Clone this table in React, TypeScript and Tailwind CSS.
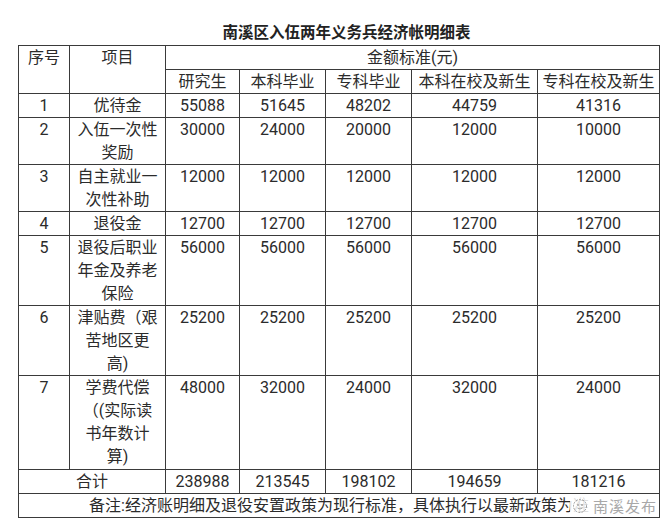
import React from "react";

const F = { fontFamily: 'Roboto, "Noto Sans CJK SC", sans-serif' } as const;

type Row = { no: string; item: string[]; vals: string[]; h: string };

const rows: Row[] = [
  { no: "1", item: ["优待金"], vals: ["55088", "51645", "48202", "44759", "41316"], h: "h-[24px]" },
  { no: "2", item: ["入伍一次性", "奖励"], vals: ["30000", "24000", "20000", "12000", "10000"], h: "h-[47px]" },
  { no: "3", item: ["自主就业一", "次性补助"], vals: ["12000", "12000", "12000", "12000", "12000"], h: "h-[46px]" },
  { no: "4", item: ["退役金"], vals: ["12700", "12700", "12700", "12700", "12700"], h: "h-[24px]" },
  { no: "5", item: ["退役后职业", "年金及养老", "保险"], vals: ["56000", "56000", "56000", "56000", "56000"], h: "h-[70px]" },
  { no: "6", item: ["津贴费（艰", "苦地区更", "高)"], vals: ["25200", "25200", "25200", "25200", "25200"], h: "h-[70px]" },
  { no: "7", item: ["学费代偿", "（(实际读", "书年数计", "算)"], vals: ["48000", "32000", "24000", "32000", "24000"], h: "h-[94px]" },
];

const td = "border border-[#3a3a3a] align-top text-center p-0 leading-[23px]";

export default function App() {
  return (
    <div className="w-[669px] h-[529px] bg-white text-[#2b2b2b] overflow-hidden" style={F}>
      <div className="pt-[21px] pl-[18px]">
        <div className="w-[641px] h-[24px] pl-[16px] text-center font-bold text-[15.5px] leading-[24px] text-[#222]">
          南溪区入伍两年义务兵经济帐明细表
        </div>
        <div className="relative">
          <table className="table-fixed border-collapse w-[641px] text-[16px]">
            <colgroup>
              <col className="w-[51px]" />
              <col className="w-[96px]" />
              <col className="w-[74px]" />
              <col className="w-[86px]" />
              <col className="w-[86px]" />
              <col className="w-[126px]" />
              <col className="w-[122px]" />
            </colgroup>
            <tbody>
              <tr className="h-[23px]">
                <td rowSpan={2} className={td}>序号</td>
                <td rowSpan={2} className={td}>项目</td>
                <td colSpan={5} className={td}>金额标准(元)</td>
              </tr>
              <tr className="h-[23px]">
                <td className={td}>研究生</td>
                <td className={td}>本科毕业</td>
                <td className={td}>专科毕业</td>
                <td className={td}>本科在校及新生</td>
                <td className={td}>专科在校及新生</td>
              </tr>
              {rows.map((r) => (
                <tr key={r.no} className={r.h}>
                  <td className={td}>{r.no}</td>
                  <td className={td}>
                    {r.item.map((l, i) => (
                      <div key={i}>{l}</div>
                    ))}
                  </td>
                  {r.vals.map((v, i) => (
                    <td key={i} className={td}>{v}</td>
                  ))}
                </tr>
              ))}
              <tr className="h-[23px]">
                <td colSpan={2} className={td}>合计</td>
                <td className={td}>238988</td>
                <td className={td}>213545</td>
                <td className={td}>198102</td>
                <td className={td}>194659</td>
                <td className={td}>181216</td>
              </tr>
              <tr className="h-[24px]">
                <td colSpan={7} className={td + " whitespace-nowrap"}>
                  备注:经济账明细及退役安置政策为现行标准，具体执行以最新政策为准
                </td>
              </tr>
            </tbody>
          </table>
          <div className="absolute right-[10px] bottom-[2px] h-[20px] flex items-center gap-[5px] bg-white/85 pl-[2px] pr-[2px]">
            <svg width="16" height="16" viewBox="0 0 16 16" className="text-[#9a9a9a]">
              <circle cx="8" cy="8" r="6.5" fill="none" stroke="currentColor" strokeWidth="1" strokeDasharray="2 1.2" />
              <circle cx="6" cy="7" r="0.9" fill="currentColor" />
              <circle cx="10" cy="7" r="0.9" fill="currentColor" />
              <path d="M5.5 10 Q8 12 10.5 10" fill="none" stroke="currentColor" strokeWidth="0.9" />
            </svg>
            <span className="text-[15px] leading-[20px] text-[#a8a8a8] tracking-[1px]" style={{ fontFamily: '"Noto Sans CJK SC", sans-serif' }}>
              南溪发布
            </span>
          </div>
        </div>
      </div>
    </div>
  );
}
